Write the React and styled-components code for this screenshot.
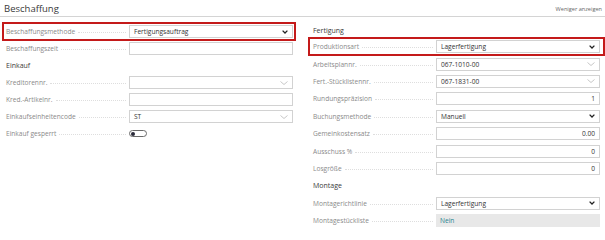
import React from "react";
import styled, { createGlobalStyle } from "styled-components";

const GlobalStyle = createGlobalStyle`
  body {
    margin: 0;
    background: #ffffff;
    font-family: "Open Sans", "Noto Sans", sans-serif;
    color: #333333;
  }
`;

const Page = styled.div`
  width: 605px;
  height: 240px;
  background: #ffffff;
  overflow: hidden;
`;

const Header = styled.div`
  height: 17px;
  display: flex;
  align-items: center;
  justify-content: space-between;
  padding: 1px 3px 0 4px;
  border-bottom: 1px solid #d4d4d4;
  box-sizing: border-box;
`;

const Title = styled.div`
  font-size: 9.5px;
  color: #3a3a3a;
`;

const ToggleLink = styled.div`
  font-size: 5.6px;
  color: #666666;
`;

const Columns = styled.div`
  display: grid;
  grid-template-columns: 292px 295px;
  column-gap: 14px;
  padding: 6px 0 0 3px;
  align-items: start;
`;

const Column = styled.div`
  display: flex;
  flex-direction: column;
`;

const Heading = styled.div`
  height: ${(p) => p.$h}px;
  display: flex;
  align-items: center;
  padding-left: ${(p) => p.$pad}px;
  font-size: 7px;
  color: #3a3a3a;
`;

const Row = styled.div`
  height: ${(p) => p.$h}px;
  display: flex;
  align-items: center;
  padding-left: ${(p) => p.$pad}px;
  box-sizing: border-box;
  outline: ${(p) => (p.$marked ? "2px solid #c41a1a" : "none")};
  outline-offset: -1px;
`;

const Label = styled.div`
  width: 123px;
  flex-shrink: 0;
  display: flex;
  align-items: center;
  font-size: 6.6px;
  color: #8a8a8a;
  white-space: nowrap;

  &::after {
    content: "";
    flex: 1;
    margin: 2px 3px 0 3px;
    border-bottom: 1px dotted #dedede;
  }
`;

const Field = styled.div`
  width: 164px;
  height: 13px;
  box-sizing: border-box;
  display: flex;
  align-items: center;
  justify-content: ${(p) => (p.$right ? "flex-end" : "space-between")};
  padding: 0 4px;
  border: ${(p) => (p.$readonly ? "none" : "1px solid #d2d2d2")};
  background: ${(p) => (p.$readonly ? "#e8e8e8" : "#ffffff")};
  font-size: 6.6px;
  color: ${(p) => (p.$readonly ? "#2a8591" : "#333333")};
`;

const Switch = styled.div`
  width: 18px;
  height: 7px;
  box-sizing: border-box;
  border: 1px solid #6a6a6a;
  border-radius: 4px;
  display: flex;
  align-items: center;
  padding-left: 1px;

  &::before {
    content: "";
    width: 4px;
    height: 4px;
    border-radius: 50%;
    background: #2b2b3a;
  }
`;

const Chevron = ({ bold }) =>
  bold ? (
    <svg width="6" height="4" viewBox="0 0 6 4">
      <path d="M0.6 0.6 L3 3 L5.4 0.6" fill="none" stroke="#222" strokeWidth="1.3" />
    </svg>
  ) : (
    <svg width="8" height="4" viewBox="0 0 8 4">
      <path d="M0.5 0.5 L4 3.5 L7.5 0.5" fill="none" stroke="#b0b0b0" strokeWidth="0.7" />
    </svg>
  );

const FormRow = ({ label, value, pad, rowH, marked, select, bold, right, readonly, toggle }) => (
  <Row $pad={pad} $h={rowH} $marked={marked}>
    <Label>{label}</Label>
    {toggle ? (
      <Switch />
    ) : (
      <Field $right={right} $readonly={readonly}>
        <span>{value}</span>
        {select && <Chevron bold={bold} />}
      </Field>
    )}
  </Row>
);

const left = [
  { label: "Beschaffungsmethode", value: "Fertigungsauftrag", select: true, bold: true, marked: true },
  { label: "Beschaffungszeit", value: "" },
  { heading: "Einkauf" },
  { label: "Kreditorennr.", value: "", select: true },
  { label: "Kred.-Artikelnr.", value: "" },
  { label: "Einkaufseinheitencode", value: "ST", select: true },
  { label: "Einkauf gesperrt", toggle: true },
];

const right = [
  { heading: "Fertigung", h: 15 },
  { label: "Produktionsart", value: "Lagerfertigung", select: true, bold: true, marked: true },
  { label: "Arbeitsplannr.", value: "067-1010-00", select: true },
  { label: "Fert.-Stücklistennr.", value: "067-1831-00", select: true },
  { label: "Rundungspräzision", value: "1", right: true },
  { label: "Buchungsmethode", value: "Manuell", select: true, bold: true },
  { label: "Gemeinkostensatz", value: "0.00", right: true },
  { label: "Ausschuss %", value: "0", right: true },
  { label: "Losgröße", value: "0", right: true },
  { heading: "Montage" },
  { label: "Montagerichtlinie", value: "Lagerfertigung", select: true, bold: true },
  { label: "Montagestückliste", value: "Nein", readonly: true },
];

const renderItems = (items, pad, rowH) =>
  items.map((it, i) =>
    it.heading ? (
      <Heading key={i} $pad={pad} $h={it.h || rowH}>
        {it.heading}
      </Heading>
    ) : (
      <FormRow key={i} pad={pad} rowH={rowH} {...it} />
    )
  );

export default function App() {
  return (
    <Page>
      <GlobalStyle />
      <Header>
        <Title>Beschaffung</Title>
        <ToggleLink>Weniger anzeigen</ToggleLink>
      </Header>
      <Columns>
        <Column>{renderItems(left, 3, 17)}</Column>
        <Column>{renderItems(right, 4, 17.4)}</Column>
      </Columns>
    </Page>
  );
}
